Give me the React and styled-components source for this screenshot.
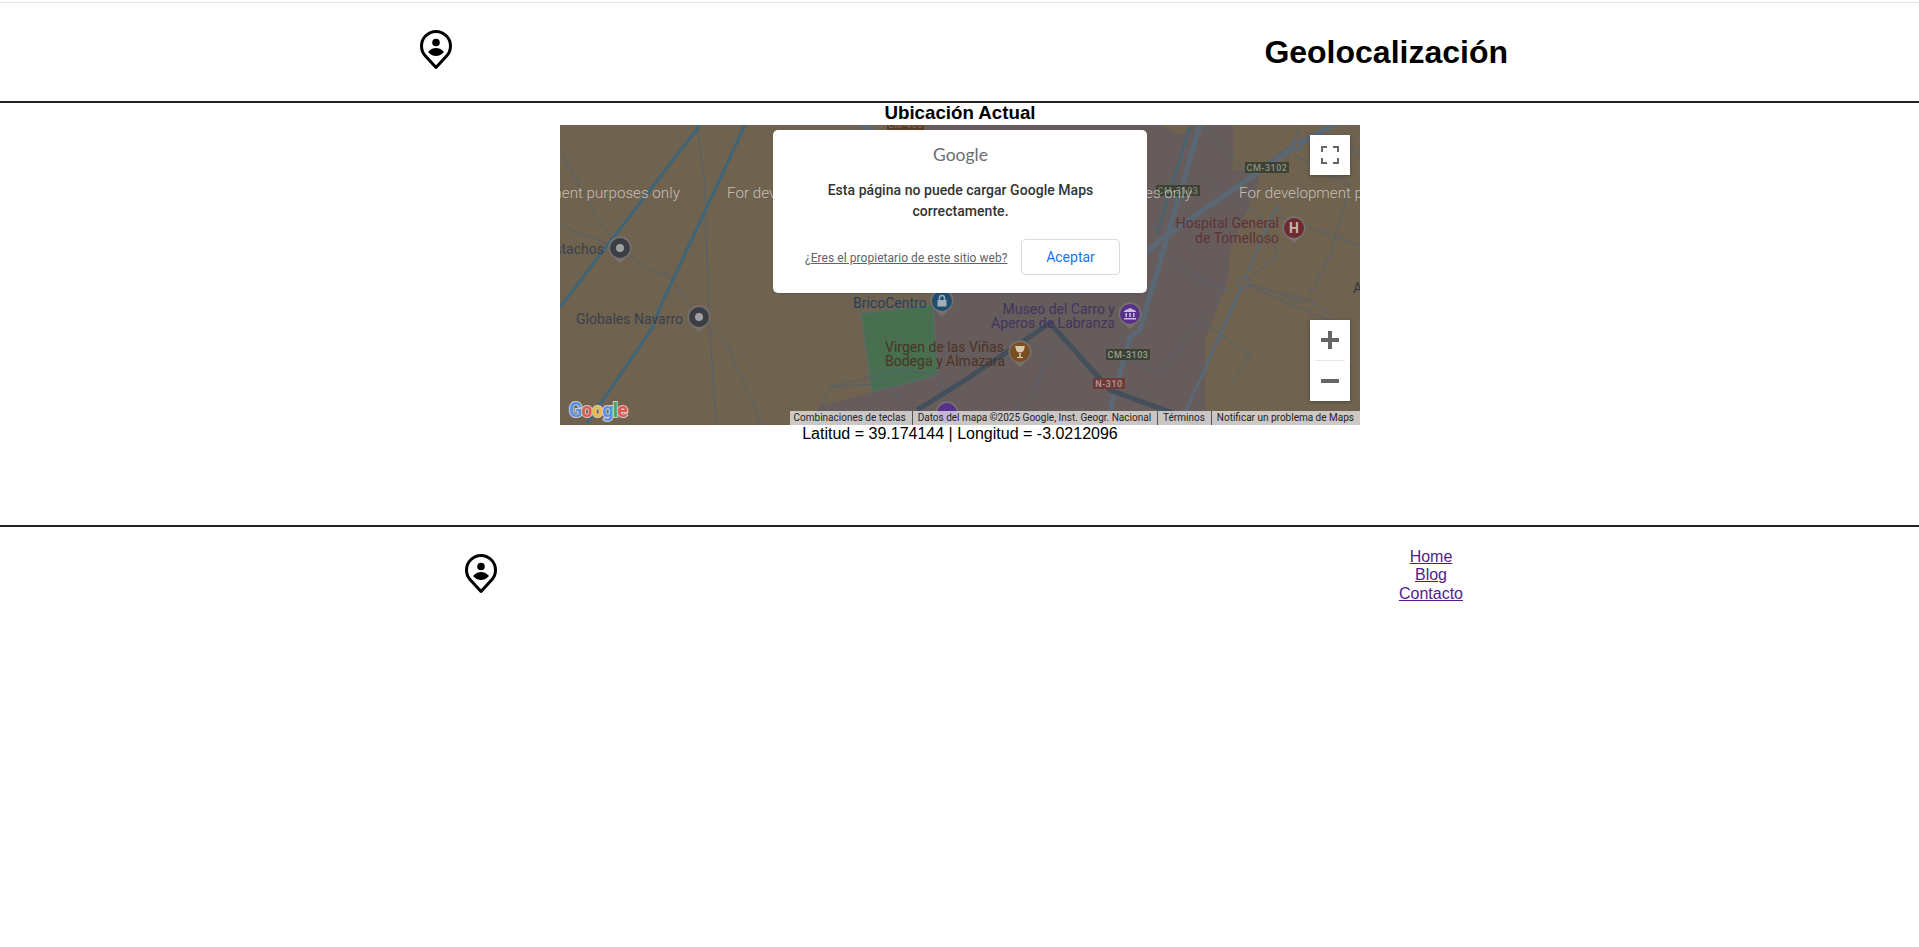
import styled, { createGlobalStyle } from 'styled-components'

const GlobalStyle = createGlobalStyle`
body {
  margin: 0;
  background: #fff;
  color: #000;
  font-family: "Liberation Sans", Arial, sans-serif;
  font-size: 16px;
}
`

const Header = styled.header`
display: flex;
justify-content: space-between;
align-items: flex-start;
margin-top: 2px;
height: 98px;
padding: 0 411px 0 420px;
border-top: 1px solid #e5e5e5;
border-bottom: 2px solid #222;
`

const PinIcon = styled.svg`
display: block;
width: 32px;
height: 40px;
margin-top: ${(props) => props.$top}px;
`

const Title = styled.h1`
margin: 31px 0 0;
font-size: 32px;
line-height: 37px;
font-weight: 700;
`

const Main = styled.main`
display: flex;
flex-direction: column;
align-items: center;
padding: 0 0 82px 1px;
`

const Subtitle = styled.h3`
margin: 0 0 2px;
font-size: 18.72px;
line-height: 20px;
font-weight: 700;
`

const MapFrame = styled.div`
position: relative;
width: 800px;
height: 300px;
overflow: hidden;
background: #6f6350;
`

const MapCanvas = styled.svg`
display: block;
width: 800px;
height: 300px;
font-family: Roboto, sans-serif;
`

const Dialog = styled.div`
position: absolute;
top: 5px;
left: 213px;
box-sizing: border-box;
width: 374px;
height: 163px;
padding: 11px 27px 0 28px;
background: #fff;
border-radius: 5px;
box-shadow: 0 1px 2px rgba(60, 64, 67, 0.3);
font-family: Roboto, sans-serif;
display: flex;
flex-direction: column;
`

const DialogLogo = styled.div`
text-align: center;
font-family: Lato, sans-serif;
font-size: 17.5px;
line-height: 28px;
color: #6b6e72;
`

const DialogText = styled.p`
margin: 11px 0 0;
text-align: center;
font-size: 14px;
line-height: 21px;
font-weight: 500;
letter-spacing: 0.04px;
color: #333;
`

const DialogActions = styled.div`
display: flex;
align-items: center;
justify-content: space-between;
margin: 17px 0 0 4px;
`

const OwnerLink = styled.a`
margin-top: 2px;
font-size: 12px;
letter-spacing: 0.05px;
color: #5f6368;
text-decoration: underline;
`

const AcceptButton = styled.button`
width: 99px;
height: 36px;
padding: 0;
background: #fff;
border: 1px solid #dadce0;
border-radius: 4px;
font-family: Roboto, sans-serif;
font-size: 14px;
color: #1a73e8;
`

const MapControl = styled.div`
position: absolute;
right: 10px;
top: ${(props) => props.$top}px;
width: 40px;
background: #fff;
box-shadow: 0 1px 4px rgba(0, 0, 0, 0.3);
`

const ControlButton = styled.div`
display: flex;
align-items: center;
justify-content: center;
height: 40px;
`

const ControlDivider = styled.div`
height: 1px;
margin: 0 5px;
background: #e6e6e6;
`

const Attribution = styled.div`
position: absolute;
right: 0;
bottom: 0;
display: flex;
height: 14px;
background: rgba(255, 255, 255, 0.65);
font-family: Roboto, sans-serif;
font-size: 10px;
line-height: 14px;
color: #222;
white-space: nowrap;
`

const AttributionItem = styled.span`
padding: 0 6px 0 4px;
& + & {
  border-left: 1px solid #555;
  padding-left: 5px;
}
`

const Coordinates = styled.div`
line-height: 18px;
`

const Footer = styled.footer`
display: flex;
justify-content: space-between;
align-items: flex-start;
padding: 21px 456px 0 465px;
border-top: 2px solid #222;
`

const FooterLinks = styled.nav`
display: flex;
flex-direction: column;
align-items: center;
line-height: 18.4px;
`

const FooterLink = styled.a`
color: #551a8b;
text-decoration: underline;
`

const thickRoads = ['M357 285 L410 252 L490 198 L550 265 L613 288 L640 300']

const blueRoads = [
  { d: 'M140 0 L0 182', w: 3 },
  { d: 'M185 0 L133 112 L100 182 L93 202 L27 298', w: 3 },
  { d: 'M630 2 L597 108', w: 2 },
]

const greyRoads = [
  { d: 'M777 -2 L737 20 L600 115 L568 145', w: 5 },
  { d: 'M640 0 L580 205 L570 212 L550 285', w: 5 },
  { d: 'M300 0 L313 5', w: 5 },
  { d: 'M683 158 L620 300', w: 3 },
  { d: 'M683 158 L710 95 L718 80', w: 2 },
]

const streets = [
  'M0 25 L38 95 L60 123 L90 145 L108 150 L139 192',
  'M0 100 L56 122',
  'M137 0 L145 60 L146 110 L149 190',
  'M139 192 L150 203 L167 220 L202 300',
  'M149 192 L156 300',
  'M340 245 L270 262 L255 300 M340 245 L378 250 L390 300 M270 262 L330 258 L340 275',
  'M590 120 L610 135 L640 155 L668 165',
  'M730 20 L690 50 L640 0 M645 55 L700 90 L718 130 L683 158',
  'M683 158 L790 205 M715 90 L800 120 M735 30 L790 60 L770 130 L750 170',
  'M720 170 L745 178 M683 158 L750 175 L770 190',
  'M440 190 L470 230 L500 215 L485 240 L470 275 L450 290',
  'M560 230 L600 250 L640 195 L690 230 L670 260',
  'M740 0 L725 40 M770 10 L800 30',
]

const labels = [
  { x: -18, y: 129, fill: '#39404d', text: 'Pistachos' },
  { x: 16, y: 199, fill: '#39404d', text: 'Globales Navarro' },
  { x: 293, y: 183, fill: '#24405f', text: 'BricoCentro' },
  { x: 325, y: 227, fill: '#4d3327', text: 'Virgen de las Viñas' },
  { x: 325, y: 241, fill: '#4d3327', text: 'Bodega y Almazara' },
  { x: 555, y: 189, end: true, fill: '#41345f', text: 'Museo del Carro y' },
  { x: 555, y: 203, end: true, fill: '#41345f', text: 'Aperos de Labranza' },
  { x: 719, y: 103, end: true, fill: '#5e3236', text: 'Hospital General' },
  { x: 719, y: 118, end: true, fill: '#5e3236', text: 'de Tomelloso' },
  { x: 793, y: 168, fill: '#33363d', text: 'A' },
]

const pins = [
  { x: 60, y: 123, fill: '#3b3e44' },
  { x: 139, y: 192, fill: '#3b3e44' },
  { x: 382, y: 176, fill: '#1f4d70', glyph: 'lock' },
  { x: 460, y: 227, fill: '#7b4d22', glyph: 'glass' },
  { x: 570, y: 189, fill: '#57308c', glyph: 'museum' },
  { x: 734, y: 103, fill: '#6e2a2e', glyph: 'H' },
  { x: 387, y: 288, fill: '#57308c', glyph: 'dot' },
]

const shields = [
  { x: 327, y: -6, w: 37, fill: '#5a3d24', color: '#7d6a50', text: 'CM-400' },
  { x: 685, y: 37, w: 44, fill: '#3c4334', color: '#8c9183', text: 'CM-3102' },
  { x: 596, y: 60, w: 44, fill: '#3c4334', color: '#7e8377', text: 'CM-3103' },
  { x: 546, y: 224, w: 44, fill: '#3c4334', color: '#9a9f92', text: 'CM-3103' },
  { x: 533, y: 253, w: 32, fill: '#6f3a38', color: '#b39a96', text: 'N-310' },
]

function PersonPin({ top }) {
  return (
    <PinIcon $top={top} viewBox="0 0 32 40">
      <path
        d="M16 37.5 L5 25.5 C2.8 23 1.5 19.8 1.5 16 C1.5 8 8 1.5 16 1.5 C24 1.5 30.5 8 30.5 16 C30.5 19.8 29.2 23 27 25.5 Z"
        fill="none"
        stroke="#000"
        strokeWidth="3"
        strokeLinejoin="round"
      />
      <circle cx="16" cy="12.5" r="3.8" fill="#000" />
      <path d="M8 22 C11 18.6 13.5 18 16 18 C18.5 18 21 18.6 24 22 C21 25.4 18.5 26 16 26 C13.5 26 11 25.4 8 22 Z" fill="#000" />
    </PinIcon>
  )
}

function PinGlyph({ glyph }) {
  if (glyph === 'H') {
    return <text y="5" textAnchor="middle" fontSize="14" fontWeight="700" fill="#c9b5b3">H</text>
  }
  if (glyph === 'lock') {
    return (
      <g>
        <path d="M-2.5 -1 V-3 A2.5 2.5 0 0 1 2.5 -3 V-1" fill="none" stroke="#9fadb8" strokeWidth="1.5" />
        <rect x="-4.5" y="-1" width="9" height="6.5" fill="#9fadb8" />
      </g>
    )
  }
  if (glyph === 'glass') {
    return <path d="M-5 -6 H5 L3.5 -1 Q0 2 -3.5 -1 Z M-0.8 1 H0.8 V5 H3 V6 H-3 V5 H-0.8 Z" fill="#d8c8ae" />
  }
  if (glyph === 'museum') {
    return <path d="M0 -6 L6 -3 V-2 H-6 V-3 Z M-4.5 -1 H-3 V3 H-4.5 Z M-0.8 -1 H0.8 V3 H-0.8 Z M3 -1 H4.5 V3 H3 Z M-6 4 H6 V5.5 H-6 Z" fill="#cbbcdc" />
  }
  if (glyph === 'dot') return null
  return <circle r="4" fill="#a0a0a0" />
}

function MapPin({ x, y, fill, glyph }) {
  return (
    <g transform={`translate(${x} ${y})`}>
      <path d="M0 15 L-8 8 A11.5 11.5 0 1 1 8 8 Z" fill="#77726e" />
      <circle r="10" fill={fill} />
      <PinGlyph glyph={glyph} />
    </g>
  )
}

function MapDrawing() {
  return (
    <MapCanvas viewBox="0 0 800 300">
      <rect width="800" height="300" fill="#6f6350" />
      <path
        d="M340 0 L381 176 L373 180 L378 250 L312 267 L258 282 L253 300 L677 300 L645 285 L645 215 L668 155 L670 125 L700 55 L695 45 L673 45 L673 0 Z"
        fill="#665c5b"
      />
      <path d="M600 0 L620 10 L632 0 Z" fill="#6f6350" />
      <polygon points="301,188 373,180 378,250 312,267" fill="#476f50" stroke="#5e6a70" strokeWidth="1" />
      {streets.map((d) => (
        <path key={d} d={d} fill="none" stroke="#52606c" strokeWidth="1" />
      ))}
      {greyRoads.map((road) => (
        <path key={road.d} d={road.d} fill="none" stroke="#5a6875" strokeWidth={road.w} />
      ))}
      {thickRoads.map((d) => (
        <path key={d} d={d} fill="none" stroke="#434f5b" strokeWidth="5" />
      ))}
      {blueRoads.map((road) => (
        <path key={road.d} d={road.d} fill="none" stroke="#3e6578" strokeWidth={road.w} />
      ))}
      <circle cx="737" cy="20" r="6" fill="#5a6875" />
      <circle cx="737" cy="20" r="2.5" fill="#6f6350" />
      <circle cx="683" cy="158" r="5" fill="#6f6350" stroke="#5a6875" strokeWidth="2" />
      {shields.map((shield) => (
        <g key={shield.x}>
          <rect x={shield.x} y={shield.y} width={shield.w} height="11" fill={shield.fill} />
          <text x={shield.x + shield.w / 2} y={shield.y + 9} textAnchor="middle" fontSize="9" fontWeight="500" letterSpacing="0.5" fill={shield.color}>
            {shield.text}
          </text>
        </g>
      ))}
      {labels.map((label) => (
        <text key={label.text} x={label.x} y={label.y} textAnchor={label.end ? 'end' : 'start'} fontSize="14" fill={label.fill}>
          {label.text}
        </text>
      ))}
      {pins.map((pin) => (
        <MapPin key={pin.x} {...pin} />
      ))}
      {[-89, 167, 423, 679].map((x) => (
        <text key={x} x={x} y="73" fontSize="15.2" fontWeight="300" fill="#c4bfb5">
          For development purposes only
        </text>
      ))}
      <text x="9" y="292" fontSize="19.5" fontWeight="700" letterSpacing="-0.7" stroke="#d0cdc8" strokeWidth="2" paintOrder="stroke">
        <tspan fill="#5a8fe6">G</tspan>
        <tspan fill="#e2574c">o</tspan>
        <tspan fill="#f0b92d">o</tspan>
        <tspan fill="#5a8fe6">g</tspan>
        <tspan fill="#3fa757">l</tspan>
        <tspan fill="#e2574c">e</tspan>
      </text>
    </MapCanvas>
  )
}

function App() {
  return (
    <>
      <GlobalStyle />
      <Header>
        <PersonPin top={27} />
        <Title>Geolocalización</Title>
      </Header>
      <Main>
        <Subtitle>Ubicación Actual</Subtitle>
        <MapFrame>
          <MapDrawing />
          <Dialog>
            <DialogLogo>Google</DialogLogo>
            <DialogText>
              Esta página no puede cargar Google Maps
              <br />
              correctamente.
            </DialogText>
            <DialogActions>
              <OwnerLink>¿Eres el propietario de este sitio web?</OwnerLink>
              <AcceptButton>Aceptar</AcceptButton>
            </DialogActions>
          </Dialog>
          <MapControl $top={10}>
            <ControlButton>
              <svg width="18" height="18" viewBox="0 0 18 18" fill="none" stroke="#666" strokeWidth="2">
                <path d="M1 6 V1 H6 M12 1 H17 V6 M17 12 V17 H12 M6 17 H1 V12" />
              </svg>
            </ControlButton>
          </MapControl>
          <MapControl $top={195}>
            <ControlButton>
              <svg width="18" height="18" viewBox="0 0 18 18" fill="#666">
                <path d="M7 0 H11 V7 H18 V11 H11 V18 H7 V11 H0 V7 H7 Z" />
              </svg>
            </ControlButton>
            <ControlDivider />
            <ControlButton>
              <svg width="18" height="18" viewBox="0 0 18 18" fill="#666">
                <rect y="7" width="18" height="4" />
              </svg>
            </ControlButton>
          </MapControl>
          <Attribution>
            <AttributionItem>Combinaciones de teclas</AttributionItem>
            <AttributionItem>Datos del mapa ©2025 Google, Inst. Geogr. Nacional</AttributionItem>
            <AttributionItem>Términos</AttributionItem>
            <AttributionItem>Notificar un problema de Maps</AttributionItem>
          </Attribution>
        </MapFrame>
        <Coordinates>Latitud = 39.174144 | Longitud = -3.0212096</Coordinates>
      </Main>
      <Footer>
        <PersonPin top={6} />
        <FooterLinks>
          <FooterLink href="#">Home</FooterLink>
          <FooterLink href="#">Blog</FooterLink>
          <FooterLink href="#">Contacto</FooterLink>
        </FooterLinks>
      </Footer>
    </>
  )
}

export default App
